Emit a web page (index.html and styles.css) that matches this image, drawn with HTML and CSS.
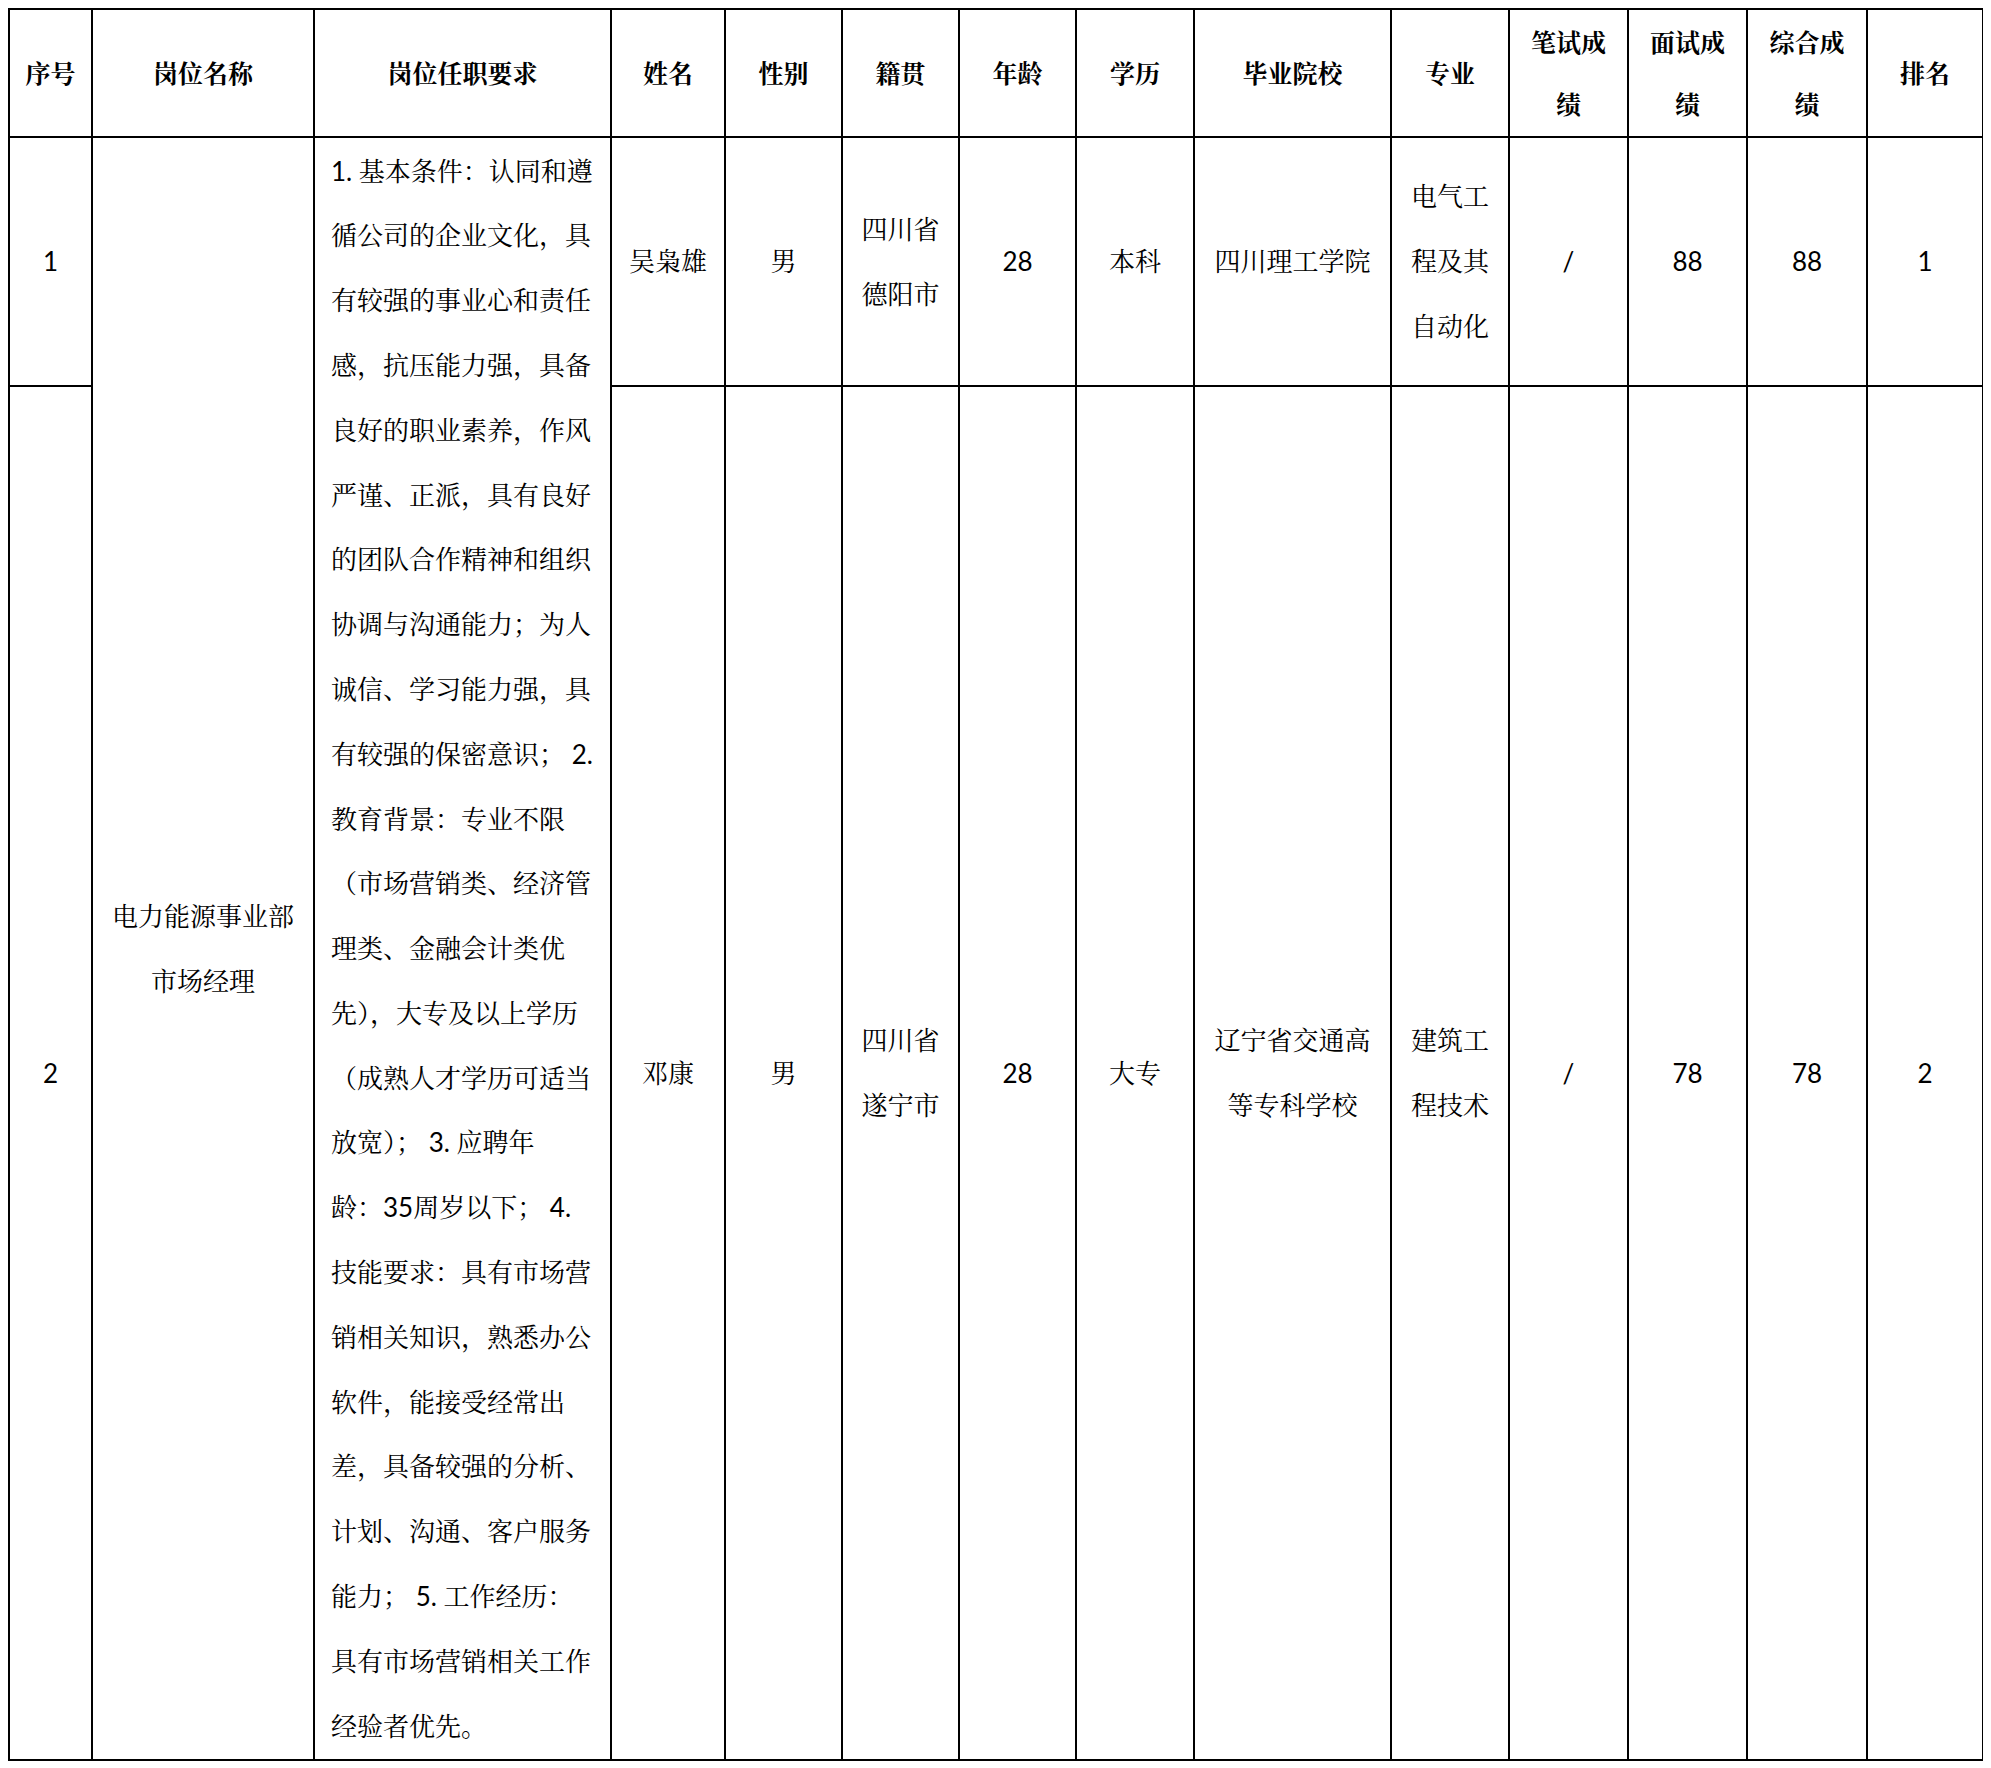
FILE: index.html
```html
<!DOCTYPE html>
<html lang="zh-CN">
<head>
<meta charset="utf-8">
<title>招聘成绩公示</title>
<link rel="stylesheet" href="styles.css">
</head>
<body>
<table class="grid">
  <colgroup>
    <col class="c-no"><col class="c-post"><col class="c-req"><col class="c-name"><col class="c-sex"><col class="c-home"><col class="c-age"><col class="c-edu"><col class="c-school"><col class="c-major"><col class="c-s1"><col class="c-s2"><col class="c-s3"><col class="c-rank">
  </colgroup>
  <thead>
    <tr class="r-head">
      <th>序号</th>
      <th>岗位名称</th>
      <th>岗位任职要求</th>
      <th>姓名</th>
      <th>性别</th>
      <th>籍贯</th>
      <th>年龄</th>
      <th>学历</th>
      <th>毕业院校</th>
      <th>专业</th>
      <th>笔试成<br>绩</th>
      <th>面试成<br>绩</th>
      <th>综合成<br>绩</th>
      <th>排名</th>
    </tr>
  </thead>
  <tbody>
    <tr class="r-one">
      <td>1</td>
      <td rowspan="2">电力能源事业部<br>市场经理</td>
      <td rowspan="2" class="req">1. 基本条件：认同和遵<br>循公司的企业文化，具<br>有较强的事业心和责任<br>感，抗压能力强，具备<br>良好的职业素养，作风<br>严谨、正派，具有良好<br>的团队合作精神和组织<br>协调与沟通能力；为人<br>诚信、学习能力强，具<br>有较强的保密意识； 2.<br>教育背景：专业不限<br>（市场营销类、经济管<br>理类、金融会计类优<br>先），大专及以上学历<br>（成熟人才学历可适当<br>放宽）； 3. 应聘年<br>龄：35周岁以下； 4.<br>技能要求：具有市场营<br>销相关知识，熟悉办公<br>软件，能接受经常出<br>差，具备较强的分析、<br>计划、沟通、客户服务<br>能力； 5. 工作经历：<br>具有市场营销相关工作<br>经验者优先。</td>
      <td>吴枭雄</td>
      <td>男</td>
      <td>四川省<br>德阳市</td>
      <td>28</td>
      <td>本科</td>
      <td>四川理工学院</td>
      <td>电气工<br>程及其<br>自动化</td>
      <td>/</td>
      <td>88</td>
      <td>88</td>
      <td>1</td>
    </tr>
    <tr class="r-two">
      <td>2</td>
      <td>邓康</td>
      <td>男</td>
      <td>四川省<br>遂宁市</td>
      <td>28</td>
      <td>大专</td>
      <td>辽宁省交通高<br>等专科学校</td>
      <td>建筑工<br>程技术</td>
      <td>/</td>
      <td>78</td>
      <td>78</td>
      <td>2</td>
    </tr>
  </tbody>
</table>
</body>
</html>
```
FILE: styles.css
```css
html {
  background: #ffffff;
  overflow: hidden;
}
body {
  margin: 8px;
  color: #000000;
  font-family: "Lato", "Noto Serif CJK SC", "Noto Sans CJK SC", serif;
  font-size: 26px;
}
.grid {
  border-collapse: collapse;
  table-layout: fixed;
  width: 1974px;
  border: 2px solid #000;
}
.grid th,
.grid td {
  border: 2px solid #000;
  padding: 0 4px;
  text-align: center;
  vertical-align: middle;
  line-height: 64.8px;
  font-weight: 400;
  white-space: nowrap;
}
.grid th {
  font-weight: 700;
  font-size: 25px;
  line-height: 62px;
}
.c-no { width: 83px; }
.c-post { width: 222px; }
.c-req { width: 297px; }
.c-name { width: 114px; }
.c-sex { width: 117px; }
.c-home { width: 117px; }
.c-age { width: 117px; }
.c-edu { width: 118px; }
.c-school { width: 197px; }
.c-major { width: 118px; }
.c-s1 { width: 119px; }
.c-s2 { width: 119px; }
.c-s3 { width: 120px; }
.c-rank { width: 116px; }
.r-head { height: 128px; }
.r-one { height: 249px; }
.r-two { height: 1374px; }
.grid td.req {
  text-align: left;
  padding: 0 10px 0 16px;
}
```
